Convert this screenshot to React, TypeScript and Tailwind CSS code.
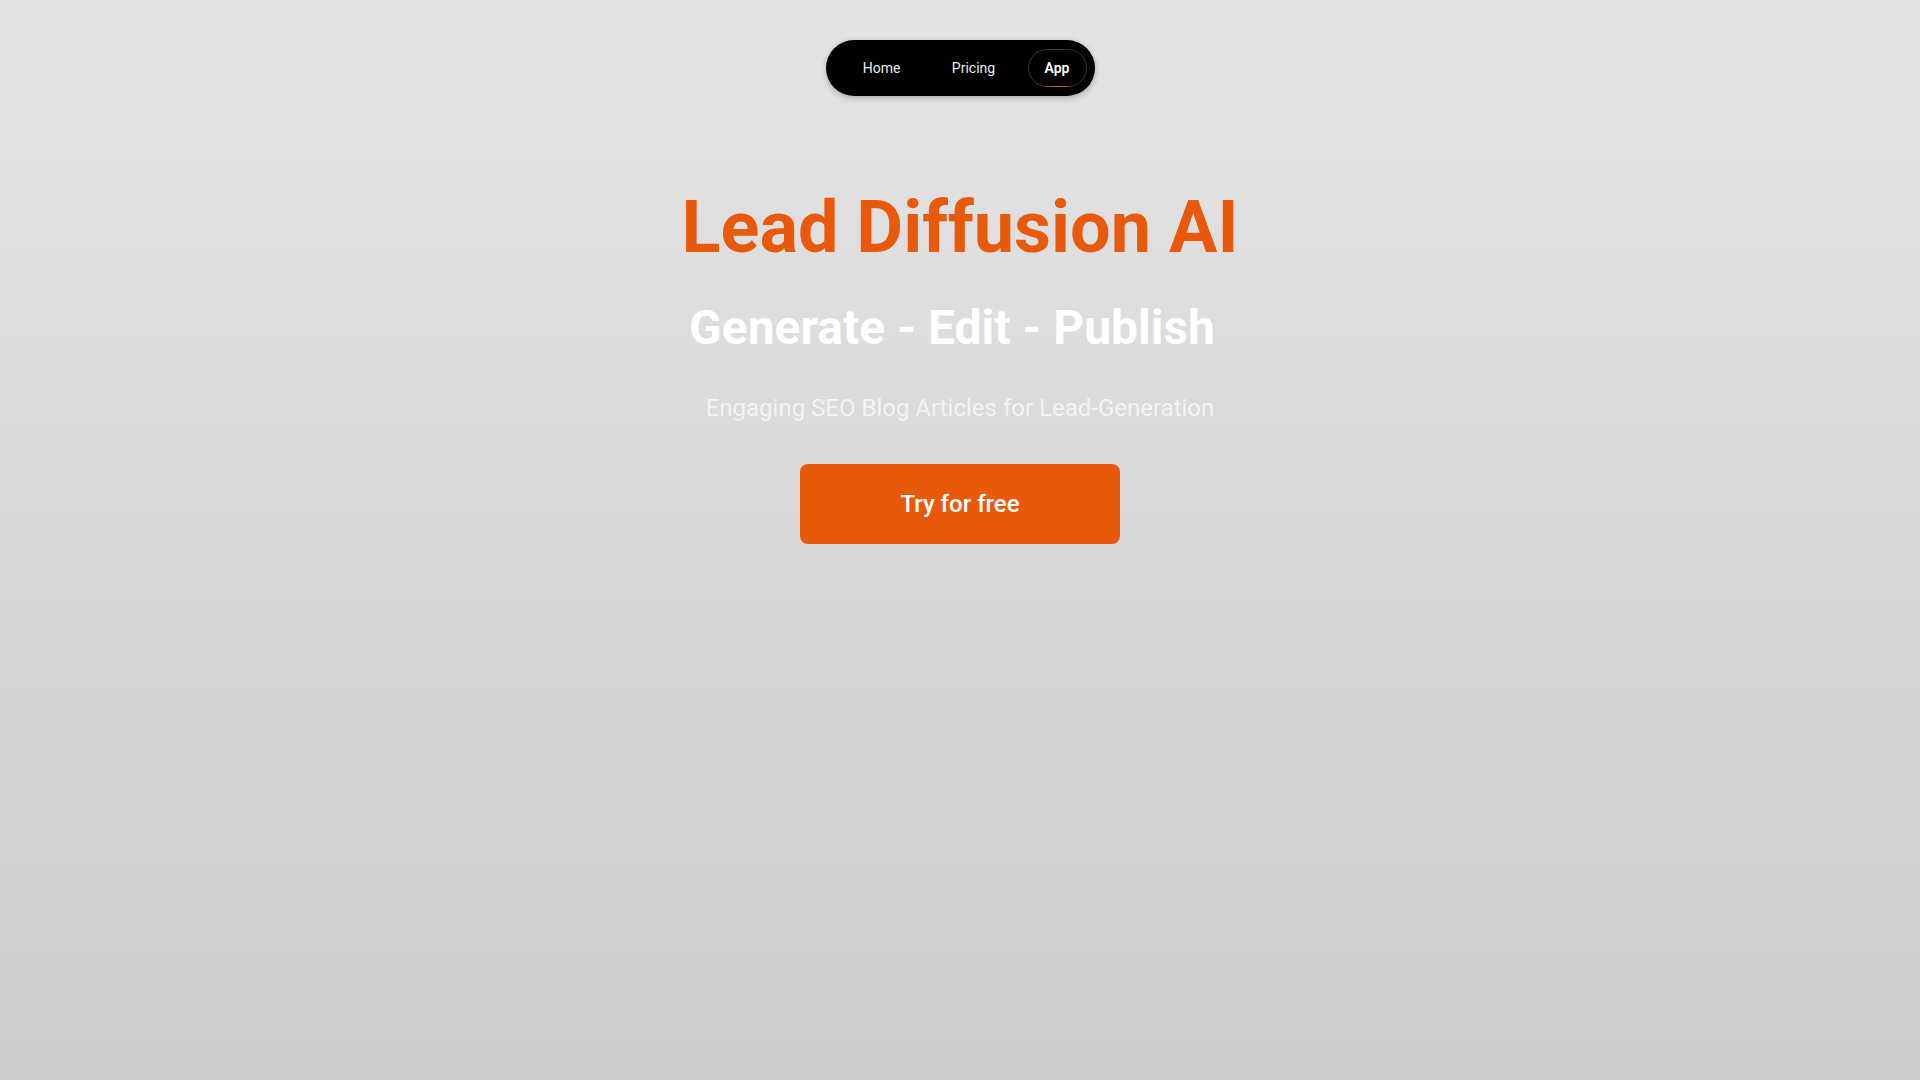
import React from "react";

export default function App() {
  return (
    <div
      className="min-h-screen w-full bg-gradient-to-b from-[#e4e4e4] to-[#cdcdcd] flex flex-col items-center"
      style={{ fontFamily: "Roboto, 'Noto Sans', Arial, sans-serif" }}
    >
      <nav className="mt-10 flex items-center h-14 rounded-full bg-black pl-2 pr-2 shadow-[0_2px_6px_rgba(0,0,0,0.25)]">
        <a className="w-24 text-center text-sm text-[#ececec]">Home</a>
        <a className="w-[88px] text-center text-sm text-[#ececec]">Pricing</a>
        <a className="relative ml-[10px] flex h-[38px] w-[59px] items-center justify-center rounded-full border border-[#3a3a3a] text-sm font-semibold text-white">
          App
          <span className="absolute -bottom-px left-1/2 h-px w-8 -translate-x-1/2 bg-gradient-to-r from-transparent via-[#ff6a1a] to-transparent" />
        </a>
      </nav>

      <main className="mt-[96px] flex flex-col items-center gap-10">
        <h1 className="text-7xl leading-none font-bold text-[#e8590c]">Lead Diffusion AI</h1>
        <h2 className="pr-4 text-5xl leading-none font-bold text-white">Generate - Edit - Publish</h2>
        <p className="text-2xl font-normal text-white/70">Engaging SEO Blog Articles for Lead-Generation</p>
        <button className="h-20 w-80 rounded-lg bg-[#e8590c] text-2xl font-medium text-white">
          Try for free
        </button>
      </main>
    </div>
  );
}
